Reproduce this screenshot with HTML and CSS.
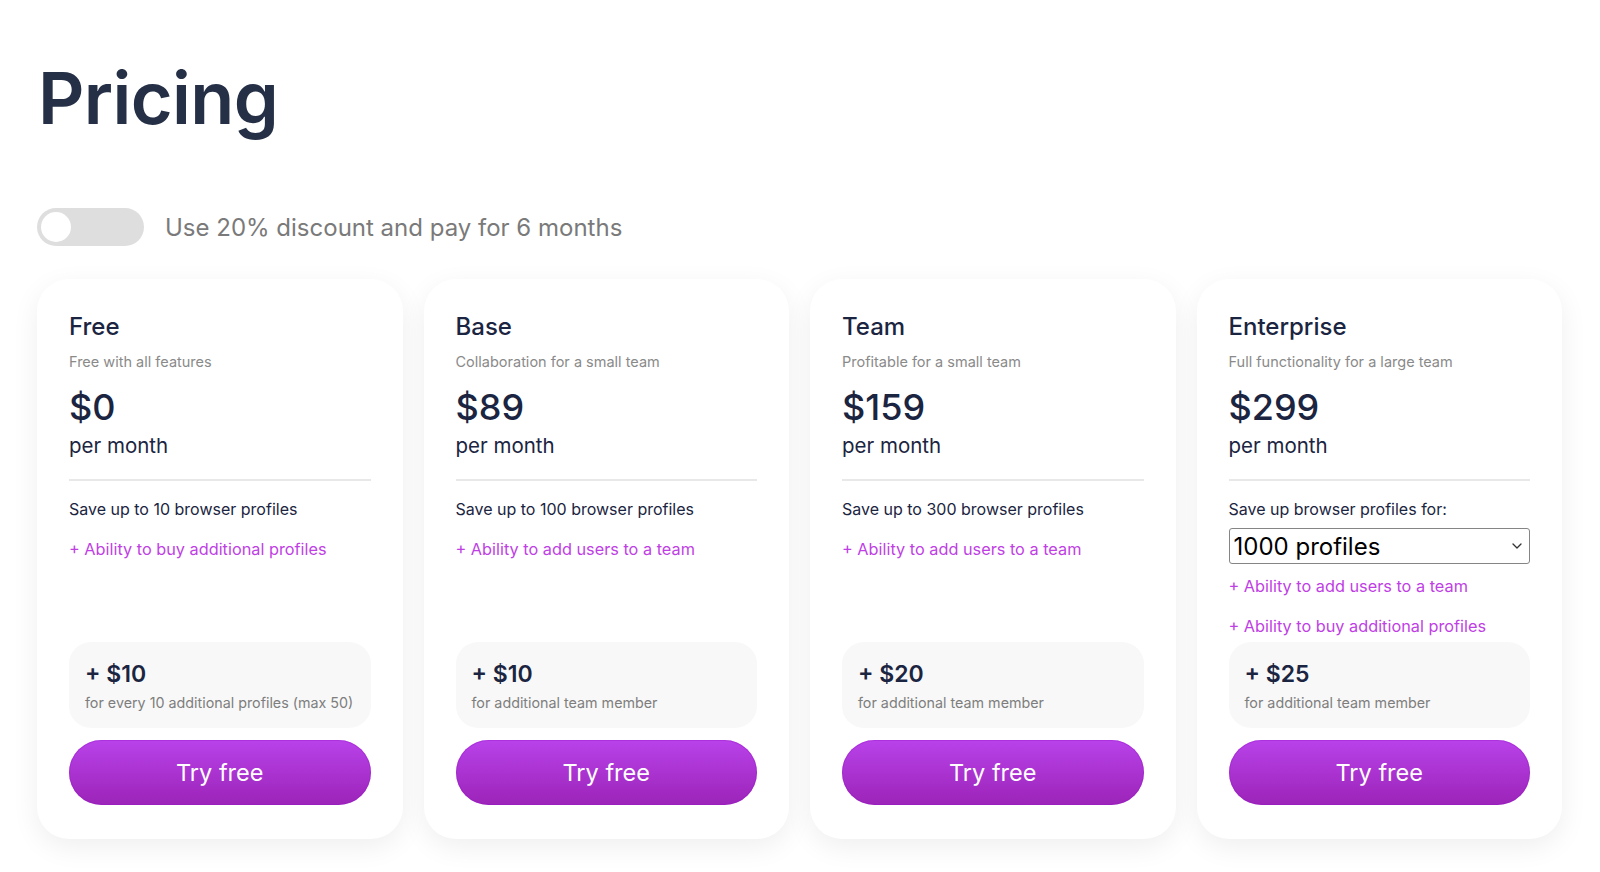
FILE: index.html
```html
<!DOCTYPE html>
<html lang="en">
<head>
<meta charset="utf-8">
<title>Pricing</title>
<link rel="stylesheet" href="styles.css">
</head>
<body>
<main class="page">
  <h1 class="title">Pricing</h1>
  <div class="discount">
    <span class="toggle"><span class="knob"></span></span>
    <span class="discount-text">Use 20% discount and pay for 6 months</span>
  </div>
  <div class="cards">
    <section class="card">
      <h2 class="plan">Free</h2>
      <p class="plan-sub">Free with all features</p>
      <div class="price">$0</div>
      <div class="period">per month</div>
      <hr class="divider">
      <div class="features">
        <p class="feature">Save up to 10 browser profiles</p>
        <p class="link">+ Ability to buy additional profiles</p>
      </div>
      <div class="extra">
        <div class="extra-price">+ $10</div>
        <div class="extra-sub">for every 10 additional profiles (max 50)</div>
      </div>
      <button class="btn">Try free</button>
    </section>
    <section class="card">
      <h2 class="plan">Base</h2>
      <p class="plan-sub">Collaboration for a small team</p>
      <div class="price">$89</div>
      <div class="period">per month</div>
      <hr class="divider">
      <div class="features">
        <p class="feature">Save up to 100 browser profiles</p>
        <p class="link">+ Ability to add users to a team</p>
      </div>
      <div class="extra">
        <div class="extra-price">+ $10</div>
        <div class="extra-sub">for additional team member</div>
      </div>
      <button class="btn">Try free</button>
    </section>
    <section class="card">
      <h2 class="plan">Team</h2>
      <p class="plan-sub">Profitable for a small team</p>
      <div class="price">$159</div>
      <div class="period">per month</div>
      <hr class="divider">
      <div class="features">
        <p class="feature">Save up to 300 browser profiles</p>
        <p class="link">+ Ability to add users to a team</p>
      </div>
      <div class="extra">
        <div class="extra-price">+ $20</div>
        <div class="extra-sub">for additional team member</div>
      </div>
      <button class="btn">Try free</button>
    </section>
    <section class="card">
      <h2 class="plan">Enterprise</h2>
      <p class="plan-sub">Full functionality for a large team</p>
      <div class="price">$299</div>
      <div class="period">per month</div>
      <hr class="divider">
      <div class="features">
        <p class="feature">Save up browser profiles for:</p>
        <div class="select-wrap">
          <select class="select">
            <option>1000 profiles</option>
            <option>2000 profiles</option>
            <option>5000 profiles</option>
          </select>
          <svg class="chevron" width="10" height="6" viewBox="0 0 10 6" aria-hidden="true"><path d="M1 1l4 4 4-4" fill="none" stroke="#333" stroke-width="1.3" stroke-linecap="round" stroke-linejoin="round"/></svg>
        </div>
        <p class="link link-first">+ Ability to add users to a team</p>
        <p class="link">+ Ability to buy additional profiles</p>
      </div>
      <div class="extra">
        <div class="extra-price">+ $25</div>
        <div class="extra-sub">for additional team member</div>
      </div>
      <button class="btn">Try free</button>
    </section>
  </div>
</main>
</body>
</html>
```

FILE: styles.css
```css
* { box-sizing: border-box; }
html { overflow: hidden; }
html, body { margin: 0; background: #ffffff; }
body {
  font-family: Inter, "Noto Sans", "Liberation Sans", sans-serif;
  color: #1b2541;
}
.page {
  padding: 52px 38px 40px 37px;
}
.title {
  margin: 0 0 0 1px;
  font-size: 72px;
  line-height: 92px;
  font-weight: 600;
  color: #253047;
  letter-spacing: -0.6px;
}
.discount {
  display: flex;
  align-items: center;
  gap: 21px;
  margin-top: 64px;
}
.toggle {
  display: flex;
  align-items: center;
  width: 107px;
  height: 38px;
  border-radius: 19px;
  background: #dedede;
  padding: 0 4px;
}
.knob {
  width: 30px;
  height: 30px;
  border-radius: 50%;
  background: #ffffff;
}
.discount-text {
  font-size: 24px;
  color: #7a7a7a;
}
.cards {
  display: grid;
  grid-template-columns: repeat(4, 1fr);
  gap: 21px;
  margin-top: 33px;
}
.card {
  display: flex;
  flex-direction: column;
  background: #ffffff;
  border-radius: 32px;
  padding: 32px 32px 34px 32px;
  box-shadow: 0 8px 28px rgba(0, 0, 0, 0.065);
}
.plan {
  margin: 0;
  font-size: 24px;
  line-height: 32px;
  font-weight: 500;
  color: #1b2541;
}
.plan-sub {
  margin: 9px 0 0;
  font-size: 14.5px;
  line-height: 20px;
  color: #8a8a8a;
}
.price {
  margin-top: 12px;
  font-size: 36px;
  line-height: 46px;
  font-weight: 500;
  color: #1b2541;
}
.period {
  margin-top: 2px;
  font-size: 20.5px;
  line-height: 28px;
  color: #1b2541;
}
.divider {
  margin: 19px 0 0;
  border: 0;
  border-top: 2px solid #e8e8e8;
}
.features {
  flex: 1;
  display: flex;
  flex-direction: column;
  padding-top: 16px;
}
.feature {
  margin: 0;
  font-size: 16px;
  line-height: 24px;
  color: #1b2541;
}
.link {
  margin: 16px 0 0;
  font-size: 16.3px;
  line-height: 24px;
  color: #c03fe5;
}
.link-first { margin-top: 10px; }
.select-wrap {
  position: relative;
  margin-top: 7px;
}
.select {
  display: block;
  width: 100%;
  height: 36px;
  font-family: Inter, "Noto Sans", sans-serif;
  font-size: 24px;
  color: #000000;
  background: #ffffff;
  border: 1px solid #858585;
  border-radius: 3px;
  padding: 0 24px 0 4px;
  appearance: none;
  -webkit-appearance: none;
}
.chevron {
  position: absolute;
  right: 8px;
  top: 15px;
  pointer-events: none;
}
.extra {
  margin-top: 4px;
  background: #f8f8f8;
  border-radius: 22px;
  padding: 17px 16px 14px;
}
.extra-price {
  font-size: 23px;
  line-height: 30px;
  font-weight: 600;
  color: #1b2541;
}
.extra-sub {
  margin-top: 3px;
  font-size: 14.3px;
  line-height: 22px;
  color: #7e7e7e;
}
.btn {
  margin-top: 12px;
  height: 65px;
  width: 100%;
  border: 0;
  border-radius: 33px;
  background: linear-gradient(180deg, #b942ea 0%, #9c24b8 100%);
  box-shadow: inset 0 0 0 1px rgba(150, 20, 200, 0.35);
  color: #ffffff;
  font-family: Inter, "Noto Sans", sans-serif;
  font-size: 23.5px;
  font-weight: 400;
  cursor: pointer;
}
```
